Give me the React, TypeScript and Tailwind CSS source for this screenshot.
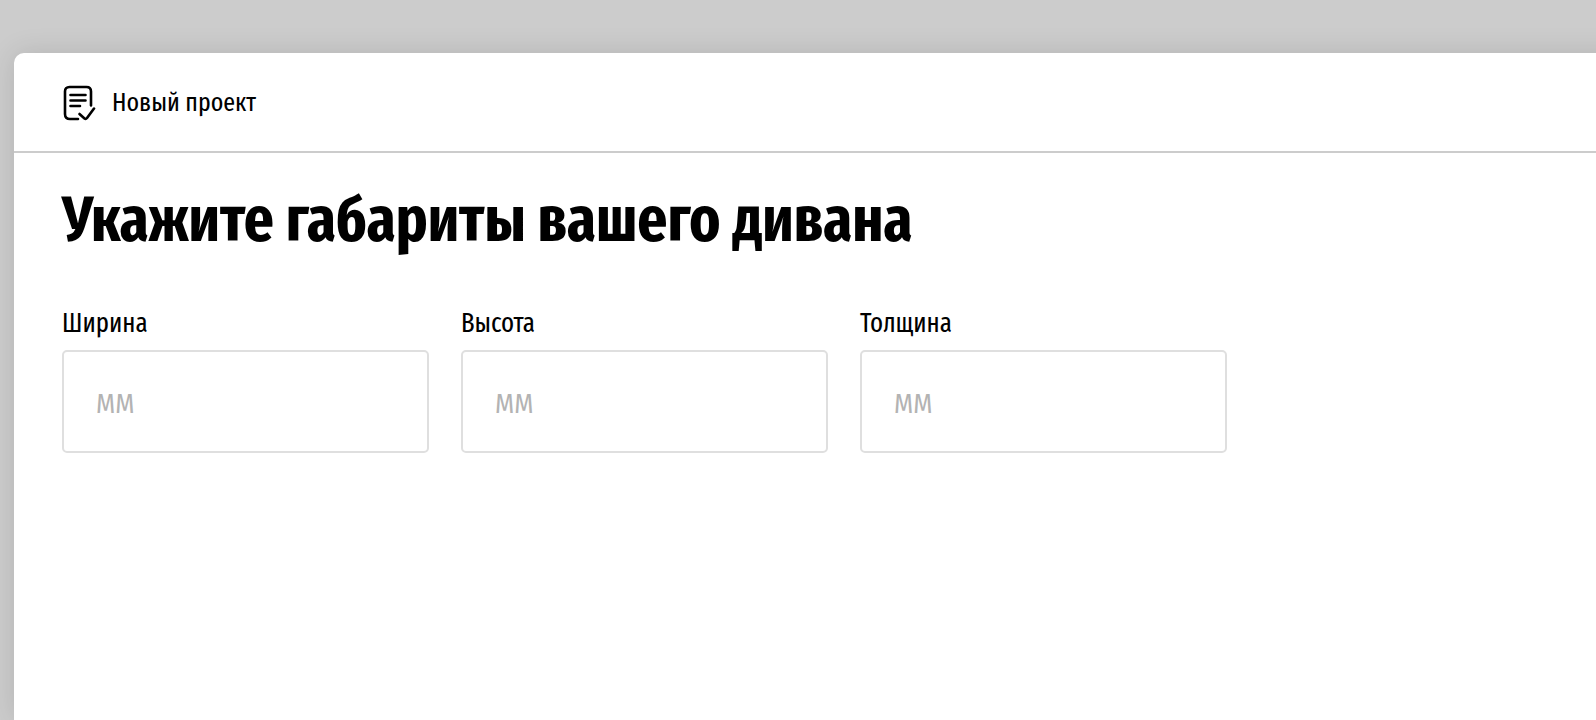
import React, { useState } from 'react';

const campos = [
  { id: 'width', label: 'Ширина' },
  { id: 'height', label: 'Высота' },
  { id: 'thickness', label: 'Толщина' },
];

const ProjectIcon: React.FC = () => (
  <svg
    className="h-9 w-[34px] shrink-0"
    viewBox="-1 0 34 36"
    fill="none"
    stroke="currentColor"
    strokeWidth={2.6}
    strokeLinecap="round"
    strokeLinejoin="round"
    aria-hidden="true"
  >
    <path d="M15 34H7Q2 34 2 29V6.5Q2 2 6.5 2H23.5Q28 2 28 6.5V20.5" />
    <path d="M7.5 10H22.5M7.5 15.5H22.5M7.5 21H17" />
    <path d="M16.5 29L21.5 33.5Q22.8 34.5 24 33L31 23.5" />
  </svg>
);

const App: React.FC = () => {
  const [values, setValues] = useState<Record<string, string>>({});

  return (
    <div className="flex min-h-screen flex-col overflow-hidden bg-[#cccccc] pl-3.5 pt-[53px] font-['Fira_Sans_Extra_Condensed','Fira_Sans_Condensed','Liberation_Sans_Narrow','Noto_Sans',sans-serif] text-black">
      <main className="-mr-12 flex-1 rounded-tl-[10px] bg-white shadow-[0_0_28px_rgba(0,0,0,0.12)]">
        <header className="flex h-[100px] items-center gap-4 border-b-2 border-[#cccccc] px-12 pt-0.5">
          <ProjectIcon />
          <span className="text-[26px] leading-8">Новый проект</span>
        </header>

        <section className="px-12 pt-7">
          <h1 className="text-[64px] font-bold leading-[78px]">Укажите габариты вашего дивана</h1>

          <form className="mt-12 flex flex-wrap gap-8">
            {campos.map(({ id, label }) => (
              <div key={id} className="flex w-[367px] flex-col gap-[11px]">
                <label htmlFor={id} className="text-[27px] leading-8">
                  {label}
                </label>
                <input
                  id={id}
                  type="text"
                  inputMode="numeric"
                  placeholder="ММ"
                  value={values[id] ?? ''}
                  onChange={(e) => setValues({ ...values, [id]: e.target.value })}
                  className="h-[103px] w-full rounded-[5px] border-2 border-[#dfdfdf] px-8 pt-1 font-['Fira_Sans_Condensed','Noto_Sans',sans-serif] text-[27px] placeholder:text-[#b3b3b3]"
                />
              </div>
            ))}
          </form>
        </section>
      </main>
    </div>
  );
};

export default App;
